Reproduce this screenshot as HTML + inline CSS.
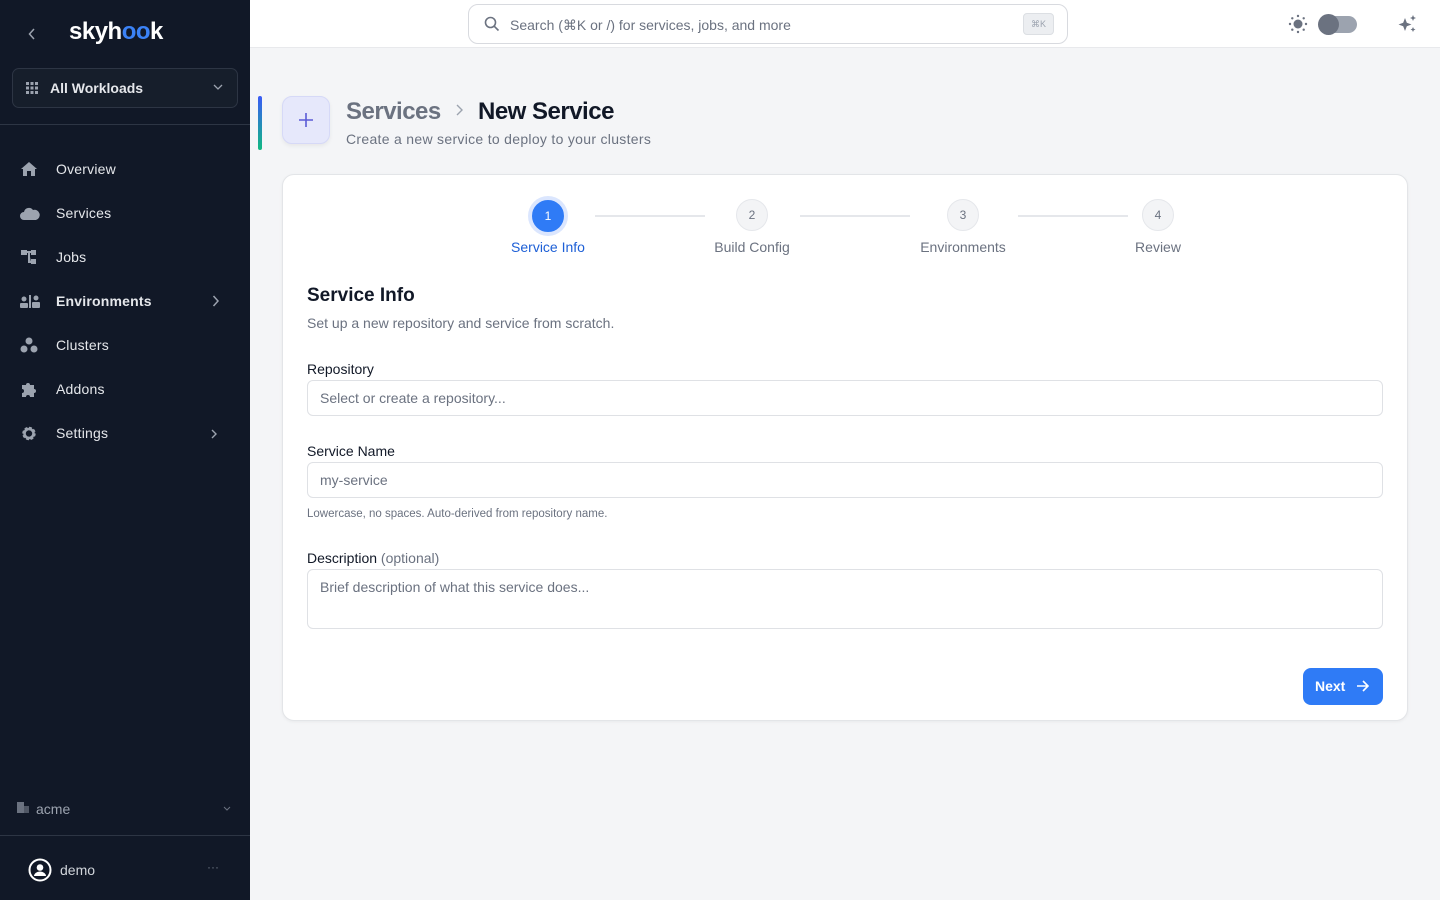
<!DOCTYPE html>
<html><head><meta charset="utf-8"><style>
*{box-sizing:border-box;margin:0;padding:0}
body{width:1440px;height:900px;overflow:hidden;font-family:"Liberation Sans",sans-serif;background:#f4f5f7;position:relative}
.sb{position:absolute;left:0;top:0;width:250px;height:900px;background:#111827;color:#d1d5db}
.logo{position:absolute;left:69px;top:18px;font-size:24px;font-weight:bold;color:#fff;letter-spacing:-0.5px}
.hr{position:absolute;left:0;width:250px;height:1px;background:#2d3544}
.wl{position:absolute;left:12px;top:68px;width:226px;height:40px;border:1px solid #2d3544;border-radius:7px;background:#161e2b;color:#e5e7eb;font-size:14px;font-weight:bold;padding:11px 0 0 37px}
.nav{position:absolute;left:56px;font-size:14px;color:#e5e7eb;letter-spacing:.2px}
.ic{position:absolute;left:20px}
.top{position:absolute;left:250px;top:0;width:1190px;height:48px;background:#fff;border-bottom:1px solid #e8e9ec}
.search{position:absolute;left:468px;top:4px;width:600px;height:40px;border:1px solid #d8dadf;border-radius:10px;background:#fff;font-size:14px;color:#6b7280;padding:12px 0 0 41px}
.kbd{position:absolute;right:13px;top:8px;width:31px;height:22px;background:#eceef1;border:1px solid #dcdfe3;border-radius:4px;font-size:9px;color:#9ca3af;text-align:center;line-height:20px}
.card{position:absolute;left:282px;top:174px;width:1126px;height:547px;background:#fff;border:1px solid #e3e5e8;border-radius:12px;box-shadow:0 1px 3px rgba(0,0,0,.05)}
.step{position:absolute;width:32px;height:32px;border-radius:50%;background:#f3f4f6;border:1px solid #e5e7eb;color:#6b7280;font-size:12px;text-align:center;line-height:30px}
.sl{position:absolute;font-size:14px;color:#6b7280;transform:translateX(-50%);white-space:nowrap}
.line{position:absolute;height:2px;background:#e5e7eb;top:40px}
.lbl{position:absolute;left:24px;font-size:14px;color:#111827}
.inp{position:absolute;left:24px;width:1076px;border:1px solid #dfe1e5;border-radius:6px;font-size:14px;color:#6b7280;padding:0 12px}
</style></head><body>
<div class="sb">
<svg style="position:absolute;left:28px;top:28px" width="8" height="12"><path d="M6 1L1.5 6 6 11" stroke="#9ca3af" fill="none" stroke-width="1.5"/></svg>
<div class="logo">skyh<span style="color:#3b82f6">oo</span>k</div>
<div class="wl"><svg style="position:absolute;left:13px;top:13px" width="12" height="12" fill="#9ca3af"><rect x="0" y="0" width="3" height="3"/><rect x="4.5" y="0" width="3" height="3"/><rect x="9" y="0" width="3" height="3"/><rect x="0" y="4.5" width="3" height="3"/><rect x="4.5" y="4.5" width="3" height="3"/><rect x="9" y="4.5" width="3" height="3"/><rect x="0" y="9" width="3" height="3"/><rect x="4.5" y="9" width="3" height="3"/><rect x="9" y="9" width="3" height="3"/></svg>All Workloads<svg style="position:absolute;right:14px;top:15px" width="10" height="7"><path d="M1 1l4 4 4-4" stroke="#9ca3af" fill="none" stroke-width="1.3"/></svg></div>
<div class="hr" style="top:124px"></div>
<svg class="ic" style="top:161px" width="18" height="16" fill="#9ca3af"><path d="M9 1L1 8h2v7h4v-5h4v5h4V8h2z"/></svg><div class="nav" style="top:161px">Overview</div>
<svg class="ic" style="top:205px" width="20" height="16" fill="#9ca3af"><path d="M4 15a4 4 0 010-8 5 5 0 019-2 4 4 0 013 10z"/></svg><div class="nav" style="top:205px">Services</div>
<svg class="ic" style="top:249px" width="18" height="16" fill="#9ca3af"><rect x="1" y="1" width="6" height="5"/><rect x="11" y="1" width="5" height="5"/><rect x="11" y="10" width="5" height="5"/><path d="M7 3h4M9 3v10h2" stroke="#9ca3af" stroke-width="2"/></svg><div class="nav" style="top:249px">Jobs</div>
<svg class="ic" style="top:293px" width="20" height="16" fill="#9ca3af"><circle cx="4" cy="6" r="2.5"/><rect x="0" y="10" width="8" height="5" rx="1"/><rect x="9" y="2" width="2" height="13"/><circle cx="16" cy="5" r="2.5"/><rect x="12" y="9" width="8" height="6" rx="1"/></svg><div class="nav" style="top:293px;font-weight:bold">Environments</div>
<svg style="position:absolute;left:212px;top:295px" width="7" height="12"><path d="M1.5 1l4.5 5-4.5 5" stroke="#9ca3af" fill="none" stroke-width="1.5"/></svg>
<svg class="ic" style="top:337px" width="18" height="16" fill="#9ca3af"><circle cx="9" cy="4" r="3.5"/><circle cx="4" cy="12" r="3.5"/><circle cx="14" cy="12" r="3.5"/></svg><div class="nav" style="top:337px">Clusters</div>
<svg class="ic" style="top:381px" width="18" height="17" fill="#9ca3af"><path d="M2 4h4a2 2 0 114 0h4v4a2 2 0 110 4v4h-4a2 2 0 10-4 0H2v-4a2 2 0 100-4z"/></svg><div class="nav" style="top:381px">Addons</div>
<svg class="ic" style="top:425px" width="18" height="17"><circle cx="9" cy="8.5" r="5" fill="none" stroke="#9ca3af" stroke-width="3.5" stroke-dasharray="2.5 1.4"/><circle cx="9" cy="8.5" r="4.5" fill="none" stroke="#9ca3af" stroke-width="2.5"/></svg><div class="nav" style="top:425px">Settings</div>
<svg style="position:absolute;left:211px;top:429px" width="6" height="10"><path d="M1 1l4 4-4 4" stroke="#9ca3af" fill="none" stroke-width="1.4"/></svg>
<svg style="position:absolute;left:17px;top:802px" width="12" height="11" fill="#6b7280"><rect x="0" y="0" width="7" height="11"/><rect x="7" y="4" width="5" height="7" opacity=".7"/></svg>
<div style="position:absolute;left:36px;top:801px;font-size:14px;color:#9ca3af">acme</div>
<svg style="position:absolute;left:223px;top:806px" width="8" height="5"><path d="M1 1l3 3 3-3" stroke="#6b7280" fill="none"/></svg>
<div class="hr" style="top:835px"></div>
<svg style="position:absolute;left:28px;top:858px" width="24" height="24"><circle cx="12" cy="12" r="10.5" fill="#111827" stroke="#fff" stroke-width="2"/><circle cx="12" cy="9.5" r="3.3" fill="#fff"/><path d="M6 18a6 4.5 0 0112 0z" fill="#fff"/></svg>
<div style="position:absolute;left:60px;top:862px;font-size:14px;color:#d1d5db">demo</div>
<div style="position:absolute;left:207px;top:860px;font-size:12px;color:#6b7280">···</div>
</div>
<div class="top"></div>
<div class="search"><svg style="position:absolute;left:15px;top:11px" width="16" height="16"><circle cx="6.5" cy="6.5" r="5" stroke="#6b7280" stroke-width="1.6" fill="none"/><path d="M10.3 10.3L14.5 14.5" stroke="#6b7280" stroke-width="1.6"/></svg>Search (⌘K or /) for services, jobs, and more<div class="kbd">⌘K</div></div>
<svg style="position:absolute;left:1287px;top:13px" width="22" height="22" fill="#6b7280"><circle cx="11" cy="11" r="4.5"/><g><circle cx="11" cy="3" r="1.2"/><circle cx="11" cy="19" r="1.2"/><circle cx="3" cy="11" r="1.2"/><circle cx="19" cy="11" r="1.2"/><circle cx="5.3" cy="5.3" r="1.2"/><circle cx="16.7" cy="16.7" r="1.2"/><circle cx="5.3" cy="16.7" r="1.2"/><circle cx="16.7" cy="5.3" r="1.2"/></g></svg>
<div style="position:absolute;left:1320px;top:16px;width:37px;height:17px;border-radius:9px;background:#9ca3af"></div>
<div style="position:absolute;left:1318px;top:14px;width:21px;height:21px;border-radius:50%;background:#6b7280"></div>
<svg style="position:absolute;left:1398px;top:14px" width="20" height="20" fill="#6b7280"><path d="M7 4l1.8 4.7L13.5 10.5 8.8 12.3 7 17 5.2 12.3 .5 10.5 5.2 8.7z"/><path d="M15 1l.9 2.1 2.1.9-2.1.9L15 7l-.9-2.1L12 4l2.1-.9z"/><path d="M15 13l.8 1.7 1.7.8-1.7.8L15 18l-.8-1.7-1.7-.8 1.7-.8z"/></svg>
<div style="position:absolute;left:258px;top:96px;width:4px;height:54px;border-radius:2px;background:linear-gradient(#3b5bf6,#10b981)"></div>
<div style="position:absolute;left:282px;top:96px;width:48px;height:48px;border-radius:10px;background:#e6e8fb;border:1px solid #d6d9f7;box-shadow:0 2px 4px rgba(0,0,0,.06)"><svg style="position:absolute;left:15px;top:15px" width="16" height="16"><path d="M8 1v14M1 8h14" stroke="#5b5bd6" stroke-width="1.6"/></svg></div>
<div style="position:absolute;left:346px;top:98px;font-size:24px;font-weight:bold;color:#6b7280;letter-spacing:-0.5px">Services</div>
<svg style="position:absolute;left:455px;top:104px" width="8" height="12"><path d="M2 1l5 5-5 5" stroke="#9ca3af" fill="none" stroke-width="1.4"/></svg>
<div style="position:absolute;left:478px;top:98px;font-size:24px;font-weight:bold;color:#111827;letter-spacing:-0.5px">New Service</div>
<div style="position:absolute;left:346px;top:131px;font-size:14px;color:#6b7280;letter-spacing:.3px">Create a new service to deploy to your clusters</div>
<div class="card">
<div style="position:absolute;left:245px;top:21px;width:40px;height:40px;border-radius:50%;background:#dbe6fe"></div>
<div class="step" style="left:249px;top:25px;background:#2f7bf6;border-color:#2f7bf6;color:#fff">1</div>
<div class="line" style="left:312px;width:110px"></div>
<div class="step" style="left:453px;top:24px">2</div>
<div class="line" style="left:517px;width:110px"></div>
<div class="step" style="left:664px;top:24px">3</div>
<div class="line" style="left:735px;width:110px"></div>
<div class="step" style="left:859px;top:24px">4</div>
<div class="sl" style="left:265px;top:64px;color:#1d5fd6">Service Info</div>
<div class="sl" style="left:469px;top:64px">Build Config</div>
<div class="sl" style="left:680px;top:64px">Environments</div>
<div class="sl" style="left:875px;top:64px">Review</div>
<div style="position:absolute;left:24px;top:110px;font-size:19px;font-weight:bold;color:#111827">Service Info</div>
<div style="position:absolute;left:24px;top:140px;font-size:14px;color:#6b7280">Set up a new repository and service from scratch.</div>
<div class="lbl" style="top:186px">Repository</div>
<div class="inp" style="top:205px;height:36px;line-height:34px">Select or create a repository...</div>
<div class="lbl" style="top:268px">Service Name</div>
<div class="inp" style="top:287px;height:36px;line-height:34px">my-service</div>
<div style="position:absolute;left:24px;top:333px;font-size:11.5px;color:#6b7280">Lowercase, no spaces. Auto-derived from repository name.</div>
<div class="lbl" style="top:375px">Description <span style="color:#6b7280">(optional)</span></div>
<div class="inp" style="top:394px;height:60px;padding-top:9px">Brief description of what this service does...</div>
<div style="position:absolute;left:1020px;top:493px;width:80px;height:37px;border-radius:8px;background:#2f7bf6;color:#fff;font-size:14px;font-weight:bold;padding:10px 0 0 12px">Next<svg style="position:absolute;left:53px;top:12px" width="13" height="12"><path d="M1 6h11M7 1l5 5-5 5" stroke="#fff" fill="none" stroke-width="1.6"/></svg></div>
</div>
</body></html>
